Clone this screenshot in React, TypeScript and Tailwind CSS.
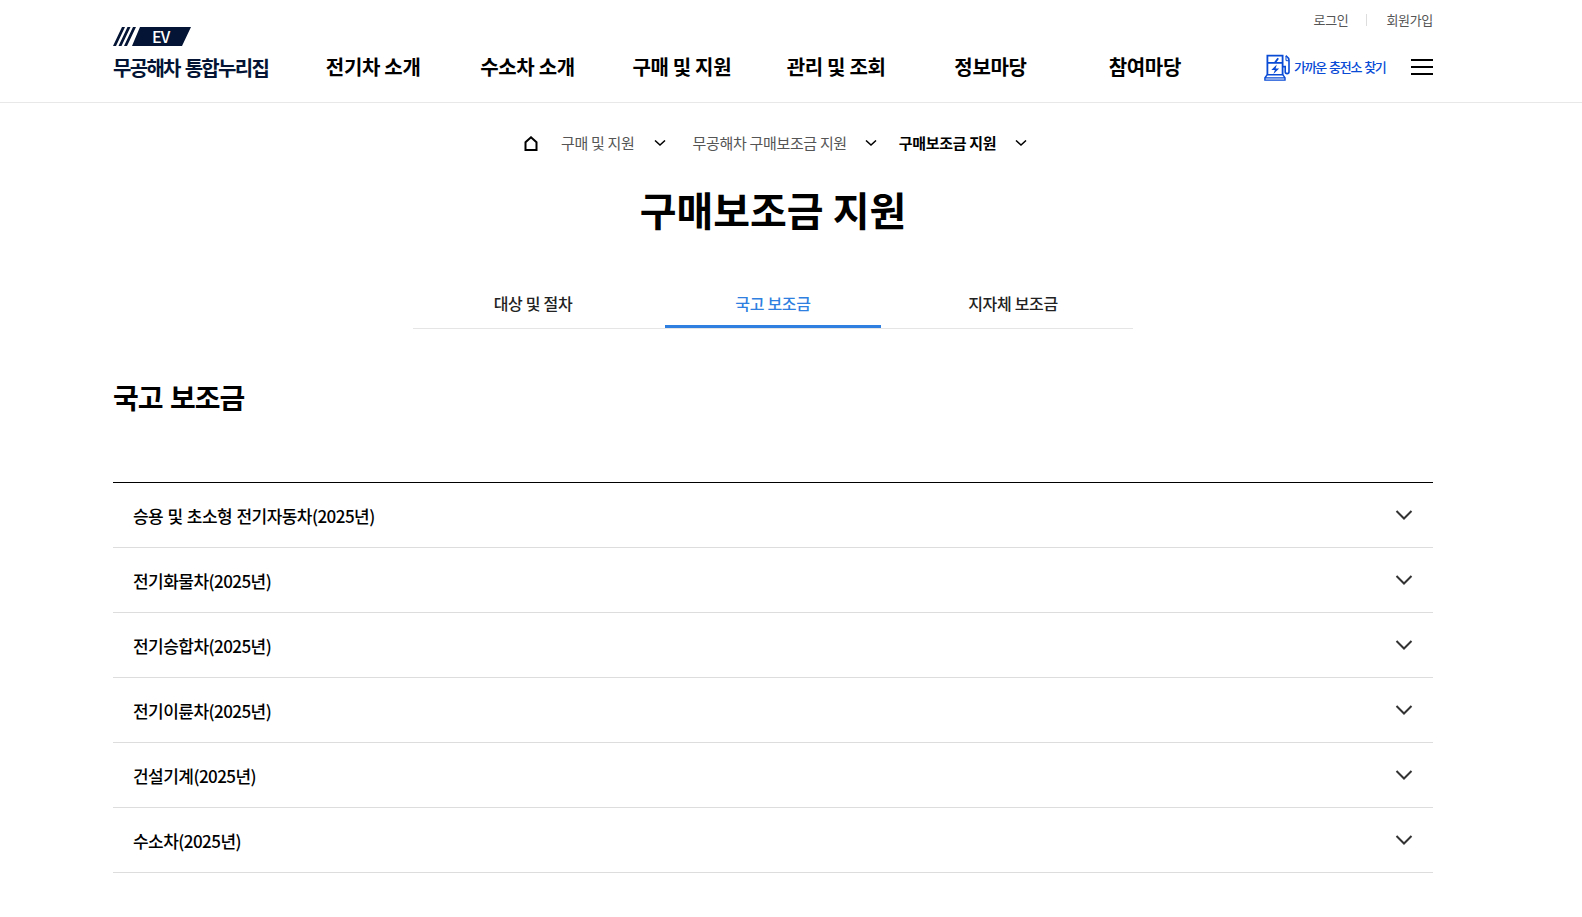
import React from "react";

const NAV_ITEMS = ["전기차 소개", "수소차 소개", "구매 및 지원", "관리 및 조회", "정보마당", "참여마당"];

const TABS = ["대상 및 절차", "국고 보조금", "지자체 보조금"];

const SUBSIDIES = [
  "승용 및 초소형 전기자동차(2025년)",
  "전기화물차(2025년)",
  "전기승합차(2025년)",
  "전기이륜차(2025년)",
  "건설기계(2025년)",
  "수소차(2025년)",
];

const Logo: React.FC = () => (
  <a href="#" className="flex w-[183px] flex-col pt-[27px] text-[#031434]">
    <div className="flex h-[19px] w-[78px]">
      <svg className="shrink-0" width="78" height="19" viewBox="0 0 78 19" fill="currentColor">
        <path d="M9 0h3L3 19H0zM14.5 0h3l-9 19h-3zM20 0h3l-9 19h-3zM27 0h51l-9 19H19z" />
      </svg>
      <span className="-ml-[39px] text-[16px] leading-[18px] font-medium tracking-[-0.8px] text-white">EV</span>
    </div>
    <span className="mt-[7px] text-[20px] leading-[30px] font-bold tracking-[-1.7px] whitespace-nowrap [word-spacing:2px]">
      무공해차 통합누리집
    </span>
  </a>
);

const ChargerIcon: React.FC = () => (
  <svg width="26" height="27" viewBox="0 0 26 27" fill="none" stroke="#0a4bd6" strokeWidth="1.8">
    <path d="M3.4 20.8V1.6h15.2v19.2M3.4 8.8h15.2M14.2 4.2l-3.2 4.4" />
    <path d="M3.2 20.8h15.6l2.2 2.9v2.4H.9v-2.4zM.9 23.9H21" strokeWidth="1.4" />
    <path d="M12.8 10.600 7.300 16h3.600l-1.500 4 5.800-5.600h-3.600z" fill="#0a4bd6" stroke="none" />
    <path d="M18.6 12.6h2.6v5.2q0 1.800 1.900 1.800t1.900-1.800V6.200q0-2.400-3.200-4.600" strokeWidth="1.6" />
    <path d="M22 2v4.6l3 .2" strokeWidth="1" />
  </svg>
);

interface ChevronProps {
  className?: string;
}

const SmallChevron: React.FC<ChevronProps> = ({ className = "" }) => (
  <svg className={className} width="12" height="7" viewBox="0 0 12 7" fill="none" stroke="#000" strokeWidth="1.5">
    <path d="M1 .5l5 4.5L11 .5" />
  </svg>
);

const Header: React.FC = () => (
  <header className="h-[103px] border-b border-[#e8e8e8]">
    <div className="ml-[113px] flex w-[1320px]">
      <Logo />
      <nav className="grid w-[926px] grid-cols-6 pt-[52px] text-center text-[20px] leading-[30px] font-bold">
        {NAV_ITEMS.map((item) => (
          <a key={item} href="#">
            {item}
          </a>
        ))}
      </nav>
      <div className="flex flex-1 flex-col items-end">
        <div className="flex h-5 items-center pt-5 text-[13px] leading-5 text-[#555]">
          <a href="#">로그인</a>
          <span className="mr-[19px] ml-[18px] h-3 w-px bg-[#ddd]" />
          <a href="#">회원가입</a>
        </div>
        <div className="mt-[33px] flex items-center">
          <a
            href="#"
            className="flex items-center text-[13px] leading-7 font-medium tracking-[-1.3px] text-[#0a4bd6] [word-spacing:1.5px]"
          >
            <ChargerIcon />
            <span className="ml-1 w-[93px] whitespace-nowrap">가까운 충전소 찾기</span>
          </a>
          <button className="ml-6 flex w-[22px] flex-col gap-[5px]" aria-label="menu">
            <span className="h-0.5 w-full bg-black" />
            <span className="h-0.5 w-full bg-black" />
            <span className="h-0.5 w-full bg-black" />
          </button>
        </div>
      </div>
    </div>
  </header>
);

const Breadcrumb: React.FC = () => (
  <div className="ml-[411px] flex h-6 items-center text-[15px] leading-6 text-[#555]">
    <svg width="14" height="15" viewBox="0 0 14 15" fill="none" stroke="#000" strokeWidth="2">
      <path d="M1.5 14V6.2L7 1.3l5.5 4.9V14z" />
    </svg>
    <span className="ml-[23px]">구매 및 지원</span>
    <SmallChevron className="ml-5" />
    <span className="ml-[26px]">무공해차 구매보조금 지원</span>
    <SmallChevron className="ml-[18px]" />
    <span className="ml-[22px] font-bold text-black">구매보조금 지원</span>
    <SmallChevron className="ml-[19px]" />
  </div>
);

const Tabs: React.FC = () => (
  <ul className="mx-auto mt-[41px] flex w-[720px] border-b border-[#e5e5e5]">
    {TABS.map((tab) => (
      <li key={tab} className="flex h-12 w-60 justify-center">
        <a
          href="#"
          className={
            tab === "국고 보조금"
              ? "w-[216px] border-b-3 border-[#2f7fe0] text-center text-[16px] leading-[46px] font-medium text-[#2f7fe0]"
              : "w-[216px] text-center text-[16px] leading-[46px] font-medium text-[#222]"
          }
        >
          {tab}
        </a>
      </li>
    ))}
  </ul>
);

export default function App() {
  return (
    <div className="h-[917px] overflow-hidden bg-white font-['Noto_Sans_CJK_KR',sans-serif] tracking-[-0.02em] text-black">
      <Header />
      <main className="ml-[113px] w-[1320px] pt-7">
        <Breadcrumb />
        <h1 className="mt-6 text-center text-[40px] leading-[60px] font-bold tracking-normal">
          구매보조금 지원
        </h1>
        <Tabs />
        <h2 className="mt-12 text-[28px] leading-10 font-bold tracking-[-0.035em] [word-spacing:2px]">국고 보조금</h2>
        <ul className="mt-[65px] border-t border-black">
          {SUBSIDIES.map((name) => (
            <li key={name} className="flex h-[65px] items-center justify-between border-b border-[#ddd] px-5">
              <span className="pt-0.5 text-[17px] leading-6 font-medium tracking-[-0.54px] [word-spacing:1px]">{name}</span>
              <svg className="mb-px" width="18" height="10" viewBox="0 0 18 10" fill="none" stroke="#333" strokeWidth="2">
                <path d="M1.5 1L9 8.5 16.5 1" />
              </svg>
            </li>
          ))}
        </ul>
      </main>
    </div>
  );
}
